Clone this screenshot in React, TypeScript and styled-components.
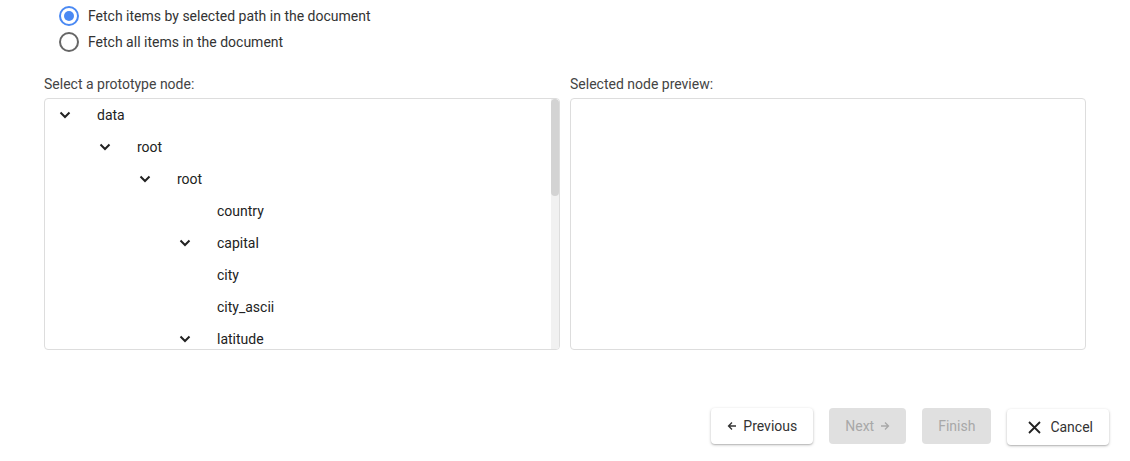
import React from "react";
import styled, { createGlobalStyle } from "styled-components";

const GlobalStyle = createGlobalStyle`
  html, body {
    margin: 0;
    padding: 0;
    background: #fff;
    font-family: Roboto, "Noto Sans", Arial, sans-serif;
  }
`;

type Node = { label: string; level: number; toggle?: boolean };

const nodes: Node[] = [
  { label: "data", level: 0, toggle: true },
  { label: "root", level: 1, toggle: true },
  { label: "root", level: 2, toggle: true },
  { label: "country", level: 3 },
  { label: "capital", level: 3, toggle: true },
  { label: "city", level: 3 },
  { label: "city_ascii", level: 3 },
  { label: "latitude", level: 3, toggle: true },
];

const Page = styled.div`
  width: 1130px;
  height: 461px;
  box-sizing: border-box;
  display: flex;
  flex-direction: column;
`;

const Options = styled.div`
  display: flex;
  flex-direction: column;
  padding: 3px 0 0 59px;
`;

const RadioRow = styled.label`
  display: flex;
  align-items: center;
  gap: 9px;
  height: 26px;
  font-size: 14px;
  color: #333;
`;

const RadioCircle = styled.span<{ $checked?: boolean }>`
  width: 20px;
  height: 20px;
  box-sizing: border-box;
  border-radius: 50%;
  border: 2px solid ${(p) => (p.$checked ? "#4a89f3" : "#666")};
  display: flex;
  align-items: center;
  justify-content: center;
  &::after {
    content: "";
    width: 10px;
    height: 10px;
    border-radius: 50%;
    background: #4a89f3;
    display: ${(p) => (p.$checked ? "block" : "none")};
  }
`;

const Columns = styled.div`
  display: flex;
  gap: 10px;
  padding: 0 44px;
  margin-top: 21px;
`;

const Column = styled.div`
  flex: 1;
  display: flex;
  flex-direction: column;
`;

const Label = styled.div`
  font-size: 14px;
  color: #444;
  height: 16px;
  line-height: 16px;
  margin-bottom: 6px;
`;

const Panel = styled.div`
  height: 252px;
  box-sizing: border-box;
  border: 1px solid #ddd;
  border-radius: 4px;
  background: #fff;
`;

const TreePanel = styled(Panel)`
  display: flex;
  overflow: hidden;
`;

const TreeList = styled.div`
  flex: 1;
  overflow: hidden;
`;

const ScrollTrack = styled.div`
  width: 8px;
  background: #f1f1f1;
  display: flex;
  flex-direction: column;
`;

const ScrollThumb = styled.div`
  height: 97px;
  background: #d3d3d3;
  border-radius: 4px;
`;

const Row = styled.div<{ $level: number }>`
  display: flex;
  align-items: center;
  height: 32px;
  padding-left: ${(p) => 14 + p.$level * 40}px;
  font-size: 14px;
  color: #222;
`;

const Toggle = styled.span`
  width: 12px;
  height: 12px;
  margin-right: 26px;
  display: flex;
  align-items: center;
  justify-content: center;
`;

const Footer = styled.div`
  margin-top: auto;
  display: flex;
  justify-content: flex-end;
  align-items: flex-end;
  gap: 16px;
  padding: 0 21px 16px 0;
`;

const Button = styled.button<{ $disabled?: boolean; $wide?: boolean }>`
  all: unset;
  height: 36px;
  box-sizing: border-box;
  padding: 0 16px 0 ${(p) => (p.$wide ? 21 : 16)}px;
  margin-bottom: ${(p) => (p.$wide ? 0 : 1)}px;
  display: flex;
  align-items: center;
  gap: ${(p) => (p.$wide ? 9 : 6)}px;
  font-family: Roboto, "Noto Sans", Arial, sans-serif;
  font-size: 14px;
  border-radius: 4px;
  color: ${(p) => (p.$disabled ? "#a8a8a8" : "#333")};
  background: ${(p) => (p.$disabled ? "#e0e0e0" : "#fff")};
  box-shadow: ${(p) =>
    p.$disabled
      ? "none"
      : "0 1px 3px rgba(0,0,0,0.25), 0 1px 1px rgba(0,0,0,0.1)"};
`;

const Chevron = () => (
  <svg width="12" height="8" viewBox="0 0 12 8">
    <path d="M1.5 1.5 L6 6 L10.5 1.5" fill="none" stroke="#222" strokeWidth="2" />
  </svg>
);

const Arrow = ({ dir, color }: { dir: "left" | "right"; color: string }) => (
  <svg
    width="10"
    height="10"
    viewBox="0 0 10 10"
    style={{ transform: dir === "right" ? "scaleX(-1)" : undefined }}
  >
    <path d="M9 5 H1.5 M5 1.5 L1.5 5 L5 8.5" fill="none" stroke={color} strokeWidth="1.3" />
  </svg>
);

const CloseIcon = () => (
  <svg width="13" height="13" viewBox="0 0 13 13">
    <path d="M1 1 L12 12 M12 1 L1 12" fill="none" stroke="#222" strokeWidth="1.8" />
  </svg>
);

export default function App() {
  return (
    <Page>
      <GlobalStyle />
      <Options>
        <RadioRow>
          <RadioCircle $checked />
          Fetch items by selected path in the document
        </RadioRow>
        <RadioRow>
          <RadioCircle />
          Fetch all items in the document
        </RadioRow>
      </Options>
      <Columns>
        <Column>
          <Label>Select a prototype node:</Label>
          <TreePanel>
            <TreeList>
              {nodes.map((n, i) => (
                <Row key={i} $level={n.level}>
                  <Toggle>{n.toggle && <Chevron />}</Toggle>
                  {n.label}
                </Row>
              ))}
            </TreeList>
            <ScrollTrack>
              <ScrollThumb />
            </ScrollTrack>
          </TreePanel>
        </Column>
        <Column>
          <Label>Selected node preview:</Label>
          <Panel />
        </Column>
      </Columns>
      <Footer>
        <Button>
          <Arrow dir="left" color="#333" />
          Previous
        </Button>
        <Button $disabled>
          Next
          <Arrow dir="right" color="#a8a8a8" />
        </Button>
        <Button $disabled>Finish</Button>
        <Button $wide>
          <CloseIcon />
          Cancel
        </Button>
      </Footer>
    </Page>
  );
}
